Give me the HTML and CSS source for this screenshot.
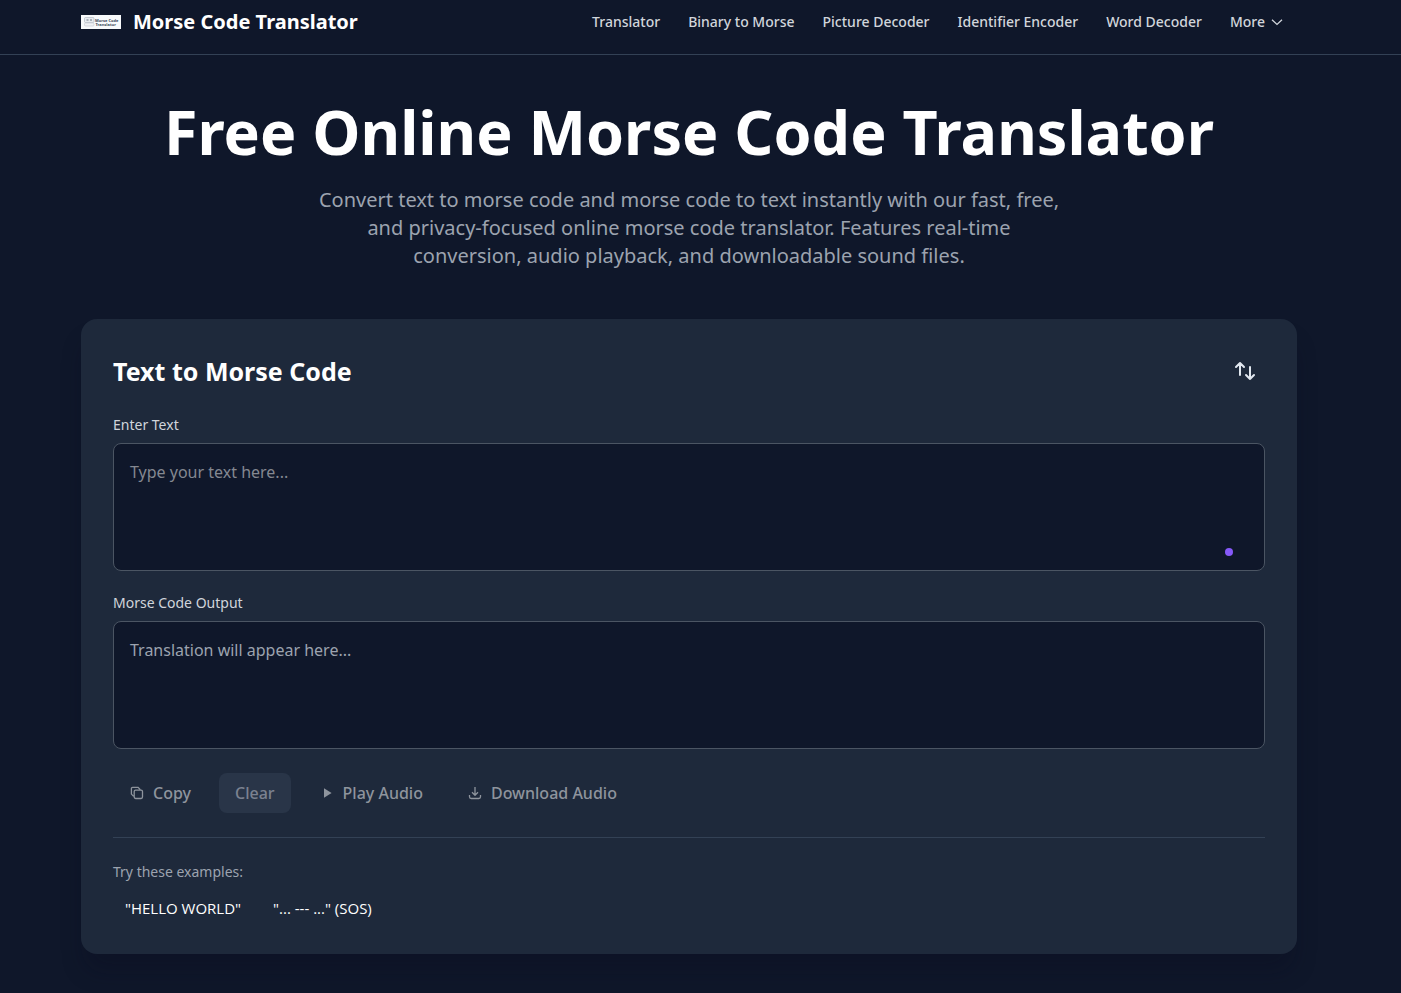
FILE: index.html
```
<!DOCTYPE html>
<html lang="en">
<head>
    <meta charset="UTF-8">
    <meta name="viewport" content="width=device-width, initial-scale=1.0">
    <title>Morse Code Translator</title>
    <link rel="stylesheet" href="styles.css">
</head>
<body>

    <header class="header">
        <div class="container header-row">
            <a class="brand" href="#">
                <svg class="logo" viewBox="0 0 40 14" aria-hidden="true">
                    <rect width="40" height="14" fill="#f8fafc"/>
                    <rect x="3.5" y="2.5" width="9.5" height="5" rx="1" fill="#e8ecf0" stroke="#aab2bc" stroke-width=".6"/>
                    <rect x="3.5" y="8" width="9.5" height="3" rx="1" fill="#f1f3f6" stroke="#c2c8d0" stroke-width=".6"/>
                    <path d="M5.5 5h2M9 5h2" stroke="#6b7684" stroke-width="1"/>
                    <text x="14" y="6.6" class="logo-text">Morse Code</text>
                    <text x="14.5" y="10.8" class="logo-text">Translator</text>
                </svg>
                <span>Morse Code Translator</span>
            </a>
            <nav class="nav">
                <a href="#">Translator</a>
                <a href="#">Binary to Morse</a>
                <a href="#">Picture Decoder</a>
                <a href="#">Identifier Encoder</a>
                <a href="#">Word Decoder</a>
                <button type="button">More
                    <svg width="12" height="12" viewBox="0 0 12 12" fill="none" stroke="currentColor" stroke-width="1.3" aria-hidden="true"><path d="M1 3.8l5 4.6 5-4.6"/></svg>
                </button>
            </nav>
        </div>
    </header>

    <main>
        <div class="container">
            <section class="hero">
                <h1>Free Online Morse Code Translator</h1>
                <p>Convert text to morse code and morse code to text instantly with our fast, free, and privacy-focused online morse code translator. Features real-time conversion, audio playback, and downloadable sound files.</p>
            </section>

            <section class="card">
                <div class="card-header">
                    <h2>Text to Morse Code</h2>
                    <button type="button" class="swap" aria-label="Swap direction">
                        <svg width="24" height="24" viewBox="0 0 24 24" fill="none" stroke="currentColor" stroke-width="2" stroke-linecap="round" stroke-linejoin="round" aria-hidden="true">
                            <path d="M7 16V4M7 4L3 8M7 4l4 4M17 8v12M17 20l4-4M17 20l-4-4"/>
                        </svg>
                    </button>
                </div>

                <label for="input">Enter Text</label>
                <div class="field">
                    <textarea id="input" placeholder="Type your text here..."></textarea>
                    <span class="dot"></span>
                </div>

                <label for="output">Morse Code Output</label>
                <div class="field">
                    <textarea id="output" class="output" placeholder="Translation will appear here..." readonly></textarea>
                </div>

                <div class="actions">
                    <button type="button" class="btn" disabled>
                        <svg width="16" height="16" viewBox="0 0 16 16" fill="none" stroke="currentColor" stroke-width="1.3" aria-hidden="true">
                            <rect x="5.2" y="5.2" width="8.3" height="8.3" rx="1.4"/>
                            <path d="M5 10.9H4.2L2.4 9.1V3.6Q2.4 2.4 3.6 2.4H9.1L10.9 4.2V5"/>
                        </svg>
                        Copy
                    </button>
                    <button type="button" class="btn btn-clear" disabled>Clear</button>
                    <button type="button" class="btn" disabled>
                        <svg width="16" height="16" viewBox="0 0 16 16" fill="currentColor" aria-hidden="true"><path d="M5 3.3v9.4L12.6 8z"/></svg>
                        Play Audio
                    </button>
                    <button type="button" class="btn" disabled>
                        <svg width="16" height="16" viewBox="0 0 16 16" fill="none" stroke="currentColor" stroke-width="1.3" stroke-linejoin="round" aria-hidden="true">
                            <path d="M8 2v8M5 7.3l3 2.9 3-2.9M2.5 10v1.8q0 1.7 1.7 1.7h7.6q1.7 0 1.7-1.7V10"/>
                        </svg>
                        Download Audio
                    </button>
                </div>

                <div class="examples">
                    <p>Try these examples:</p>
                    <div class="example-list">
                        <button type="button">"HELLO WORLD"</button>
                        <button type="button">"... --- ..." (SOS)</button>
                    </div>
                </div>
            </section>
        </div>
    </main>

</body>
</html>
```
FILE: styles.css
```
* {
    box-sizing: border-box;
}
body {
    margin: 0;
    background-color: #0f172a;
    color: #fff;
    font-family: "Noto Sans", "Open Sans", sans-serif;
    font-size: 16px;
    line-height: 24px;
}
h1, h2, p {
    margin: 0;
}
a {
    color: inherit;
    text-decoration: none;
}
button {
    font: inherit;
    color: inherit;
    background: none;
    border: none;
    padding: 0;
    cursor: pointer;
}
svg {
    display: block;
    flex: none;
}

.header, main {
    padding-right: 23px;
}
.container {
    max-width: 1280px;
    margin: 0 auto;
    padding: 0 32px;
}

/* Header */
.header {
    border-bottom: 1px solid #334155;
    padding-bottom: 10px;
}
.header-row {
    display: flex;
    justify-content: space-between;
    align-items: center;
    height: 44px;
}
.brand {
    display: flex;
    align-items: center;
    gap: 12px;
    font-size: 20px;
    font-weight: 700;
    white-space: nowrap;
}
.logo {
    width: 40px;
    height: 14px;
}
.logo-text {
    font-size: 4px;
    font-weight: 700;
    fill: #3c4a5a;
}
.nav {
    display: flex;
    align-items: center;
    font-size: 14px;
    font-weight: 500;
    color: #d1d5db;
    white-space: nowrap;
}
.nav a, .nav button {
    padding: 0 14px;
}
.nav button {
    display: flex;
    align-items: center;
    gap: 6px;
}

/* Hero */
.hero {
    padding: 45px 0 49px;
    text-align: center;
}
.hero h1 {
    font-size: 61px;
    line-height: 64px;
    font-weight: 700;
}
.hero p {
    max-width: 750px;
    margin: 22px auto 0;
    font-size: 20px;
    line-height: 28px;
    color: #9ca3af;
}

/* Translator card */
.card {
    margin-bottom: 39px;
    background-color: #1e293b;
    border-radius: 16px;
    padding: 32px;
    box-shadow: 0 20px 25px -5px rgba(10, 10, 30, 0.3);
}
.card-header {
    display: flex;
    justify-content: space-between;
    align-items: center;
    margin-bottom: 24px;
}
.card-header h2 {
    font-size: 25px;
    line-height: 32px;
    font-weight: 700;
}
.swap {
    padding: 8px;
    color: #e2e8f0;
}
label {
    display: block;
    margin-bottom: 8px;
    font-size: 14px;
    line-height: 20px;
    color: #d1d5db;
}
.field {
    position: relative;
    margin-bottom: 22px;
}
textarea {
    display: block;
    width: 100%;
    height: 128px;
    padding: 16px;
    border: 1px solid #4b5563;
    border-radius: 8px;
    background-color: #0f172a;
    color: #fff;
    font: inherit;
    resize: none;
}
textarea::placeholder {
    color: #848891;
}
.output::placeholder {
    color: #9ca3af;
}
.dot {
    position: absolute;
    right: 32px;
    bottom: 15px;
    width: 8px;
    height: 8px;
    border-radius: 50%;
    background-color: #8659f9;
}
.actions {
    display: flex;
    flex-wrap: wrap;
    gap: 12px;
    padding: 2px 0 24px;
}
.btn {
    display: flex;
    align-items: center;
    gap: 8px;
    height: 40px;
    padding: 0 16px;
    border-radius: 8px;
    font-weight: 500;
    color: #8e949d;
}
.btn-clear {
    background-color: #293548;
    color: #7b8290;
}
.examples {
    border-top: 1px solid #334155;
    padding-top: 24px;
}
.examples p {
    margin-bottom: 12px;
    font-size: 14px;
    line-height: 20px;
    color: #9ca3af;
}
.example-list {
    display: flex;
    gap: 8px;
}
.example-list button {
    height: 28px;
    padding: 0 12px;
    font-family: "Open Sans", "Noto Sans", sans-serif;
    font-size: 15px;
}
```
